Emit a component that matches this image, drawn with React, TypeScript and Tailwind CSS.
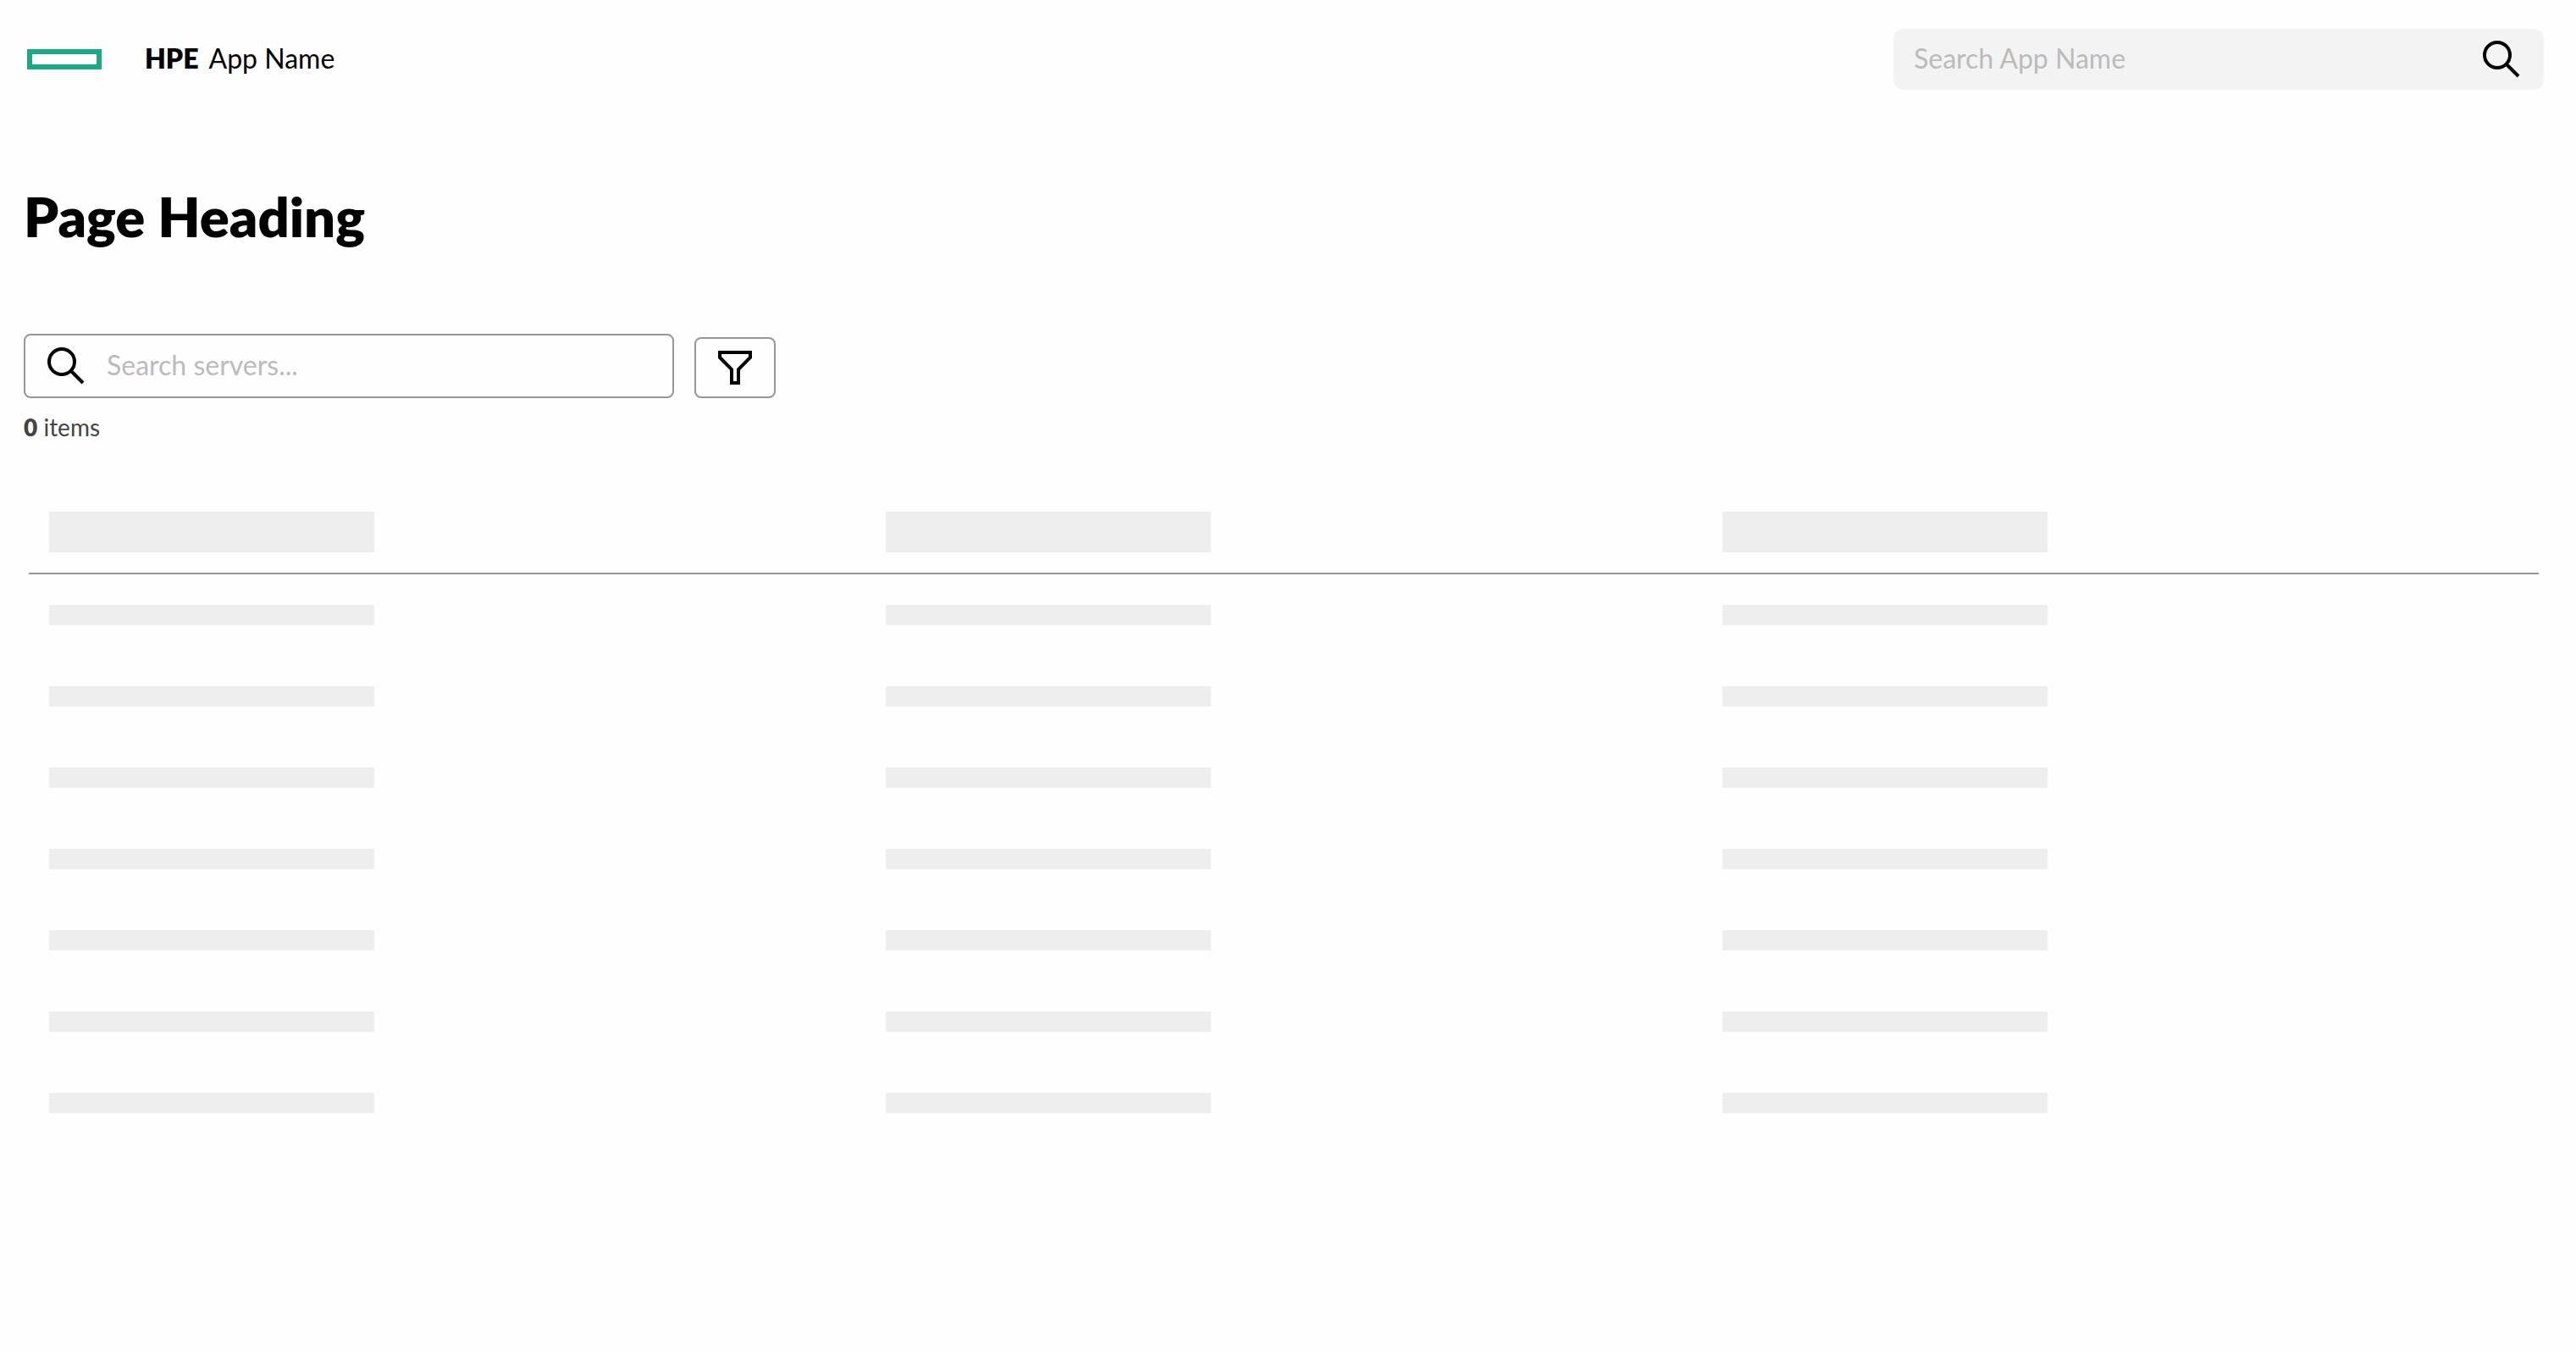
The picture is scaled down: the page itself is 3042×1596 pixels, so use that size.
const COLUMNS = ["first", "second", "third"];
const ROWS = [1, 2, 3, 4, 5, 6, 7];

function SearchIcon() {
  return (
    <svg viewBox="0 0 24 24" className="size-12 shrink-0" fill="none" stroke="#000" strokeWidth="2" aria-hidden="true">
      <circle cx="9.5" cy="9.5" r="7.5" />
      <path d="M15 15l7 7" />
    </svg>
  );
}

function FilterIcon() {
  return (
    <svg viewBox="0 0 24 24" className="size-12 shrink-0" fill="none" stroke="#000" strokeWidth="2" aria-hidden="true">
      <path d="M3 6l7 7v8h4v-8l7-7V3H3z" />
    </svg>
  );
}

function Header() {
  return (
    <header className="flex items-center justify-between py-[34px]">
      <a href="#" className="flex items-center pl-1 text-black">
        <svg viewBox="0 0 88 24" className="h-6 w-[88px]" aria-hidden="true">
          <rect x="3" y="3" width="82" height="18" fill="none" stroke="#1aa982" strokeWidth="6" />
        </svg>
        <span className="ml-[51px] flex gap-3 pb-0.5 text-[32px] leading-10">
          <span className="font-extrabold">HPE</span>
          <span>App Name</span>
        </span>
      </a>
      <form role="search" className="flex h-[72px] w-[768px] items-center rounded-xl bg-[#f3f3f3] pl-6 pr-[26px]">
        <input
          type="search"
          aria-label="Search App Name"
          placeholder="Search App Name"
          className="min-w-0 flex-1 bg-transparent pb-0.5 text-[32px] leading-10 outline-none placeholder:text-[#bbbbbb]"
        />
        <button type="button" aria-label="Search">
          <SearchIcon />
        </button>
      </form>
    </header>
  );
}

function Toolbar() {
  return (
    <div className="flex items-end gap-6">
      <label className="flex h-[76px] w-[768px] items-center gap-6 rounded-lg border-2 border-[#979797] px-6">
        <SearchIcon />
        <input
          type="search"
          aria-label="Search servers"
          placeholder="Search servers..."
          className="min-w-0 flex-1 bg-transparent pb-0.5 text-[32px] leading-10 outline-none placeholder:text-[#bbbbbb]"
        />
      </label>
      <button
        type="button"
        aria-label="Filter"
        className="flex h-[72px] w-24 items-center justify-center rounded-lg border-2 border-[#979797]"
      >
        <FilterIcon />
      </button>
    </div>
  );
}

function LoadingTable() {
  return (
    <div className="mt-[58px] px-[6px]">
      <table className="w-full table-fixed border-separate border-spacing-0" aria-busy="true" aria-label="Servers">
        <thead>
          <tr>
            {COLUMNS.map((column) => (
              <th key={column} className="border-b-2 border-[#979797] px-6 py-6">
                <div className="h-12 w-96 bg-[#eeeeee]" />
              </th>
            ))}
          </tr>
        </thead>
        <tbody>
          {ROWS.map((row) => (
            <tr key={row}>
              {COLUMNS.map((column) => (
                <td key={column} className="px-6 py-9">
                  <div className="h-6 w-96 bg-[#eeeeee]" />
                </td>
              ))}
            </tr>
          ))}
        </tbody>
      </table>
    </div>
  );
}

export default function App() {
  return (
    <div className="min-h-screen bg-[#fefefe] pl-7 pr-[38px] font-['Lato',sans-serif] text-black">
      <Header />
      <main>
        <h1 className="mt-[76px] text-[65px] font-extrabold leading-[78px]">Page Heading</h1>
        <div className="mt-[100px]">
          <Toolbar />
        </div>
        <p className="mt-4 text-[28px] leading-9 text-[#444444]">
          <span className="font-extrabold">0</span> items
        </p>
        <LoadingTable />
      </main>
    </div>
  );
}
